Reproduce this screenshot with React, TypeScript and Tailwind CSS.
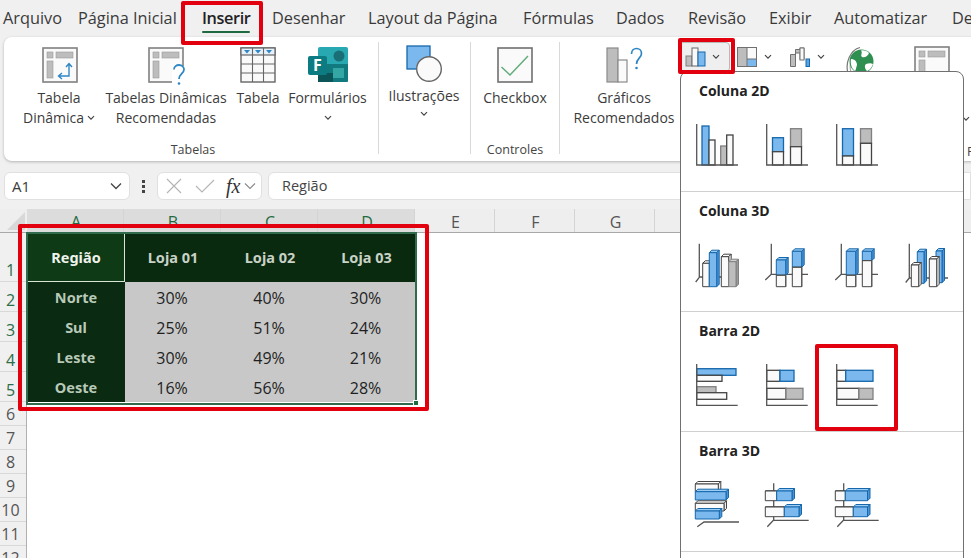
import React from "react";

type T = "b" | "g" | "w";
const fills: Record<T, [string, string, string, string]> = {
  b: ["#7ab8ee", "#1668ac", "#9ccbf3", "#4b93d6"],
  g: ["#bdbdbd", "#808080", "#d0d0d0", "#9a9a9a"],
  w: ["#fafafa", "#444444", "#ffffff", "#f0f0f0"],
};

function R({ x, y, x2, y2, t }: { x: number; y: number; x2: number; y2: number; t: T }) {
  return <rect x={x} y={y} width={x2 - x} height={y2 - y} fill={fills[t][0]} stroke={fills[t][1]} strokeWidth={1.3} />;
}

function Box({ x, y, x2, y2, t, d = 2.5 }: { x: number; y: number; x2: number; y2: number; t: T; d?: number }) {
  const [f, s, top, side] = fills[t];
  return (
    <g stroke={s} strokeWidth={1} strokeLinejoin="round">
      <polygon points={`${x},${y} ${x + d},${y - d} ${x2 + d},${y - d} ${x2},${y}`} fill={top} />
      <polygon points={`${x2},${y} ${x2 + d},${y - d} ${x2 + d},${y2 - d} ${x2},${y2}`} fill={side} />
      <rect x={x} y={y} width={x2 - x} height={y2 - y} fill={f} />
    </g>
  );
}

function Ax({ d }: { d: string }) {
  return <path d={d} fill="none" stroke="#555555" strokeWidth={1.3} />;
}

function Ico({ children }: { children: React.ReactNode }) {
  return (
    <svg width={44} height={44} viewBox="0 0 44 44" className="overflow-visible shrink-0">
      {children}
    </svg>
  );
}

const col2d = (
  <>
    <Ico>
      <R x={6} y={3} x2={13} y2={42} t="b" />
      <R x={13} y={17} x2={19} y2={42} t="w" />
      <R x={24.7} y={23} x2={30.7} y2={42} t="g" />
      <R x={30.7} y={12} x2={37} y2={42} t="w" />
      <Ax d="M0.7 1V42H42" />
    </Ico>
    <Ico>
      <R x={6.5} y={14.7} x2={17.5} y2={28.7} t="b" />
      <R x={6.5} y={28.7} x2={17.5} y2={42} t="w" />
      <R x={24.5} y={5.7} x2={35.5} y2={23.7} t="g" />
      <R x={24.5} y={23.7} x2={35.5} y2={42} t="w" />
      <Ax d="M0.7 1V42H42" />
    </Ico>
    <Ico>
      <R x={6.5} y={5.7} x2={17.5} y2={33} t="b" />
      <R x={6.5} y={33} x2={17.5} y2={42} t="w" />
      <R x={24.5} y={5.7} x2={35.5} y2={20.3} t="g" />
      <R x={24.5} y={20.3} x2={35.5} y2={42} t="w" />
      <Ax d="M0.7 1V42H42" />
    </Ico>
  </>
);

const col3d = (
  <>
    <Ico>
      <Ax d="M3.3 0.7V34.3L-0.3 39M3.3 34H42" />
      <Box x={6.7} y={20.3} x2={13.3} y2={43.7} t="w" />
      <Box x={13.3} y={9.7} x2={20.7} y2={43.7} t="b" />
      <Box x={25.3} y={13.7} x2={32.7} y2={43.7} t="w" />
      <Box x={32.7} y={18.7} x2={40} y2={43.7} t="g" />
    </Ico>
    <Ico>
      <Ax d="M5.3 0.7V31.3L-0.7 37M5.3 31.3H42" />
      <Box x={10.3} y={17} x2={19.7} y2={32.3} t="b" />
      <Box x={10.3} y={32.3} x2={19.7} y2={43.7} t="w" d={0} />
      <Box x={26.3} y={8.3} x2={35.7} y2={24.3} t="b" />
      <Box x={26.3} y={24.3} x2={35.7} y2={43.7} t="w" d={0} />
    </Ico>
    <Ico>
      <Ax d="M5.3 0.7V31.3L-0.7 37M5.3 31.3H42" />
      <Box x={10.3} y={8.3} x2={19.7} y2={32.3} t="b" />
      <Box x={10.3} y={32.3} x2={19.7} y2={43.7} t="w" d={0} />
      <Box x={26.3} y={8.3} x2={35.7} y2={17.7} t="b" />
      <Box x={26.3} y={17.7} x2={35.7} y2={43.7} t="w" d={0} />
    </Ico>
    <Ico>
      <Ax d="M3.3 0.7V35L-0.3 39.5M3.3 35H42" />
      <Box x={11.3} y={8.7} x2={18} y2={40.3} t="b" />
      <Box x={5.3} y={22} x2={12.7} y2={43.7} t="w" />
      <Box x={30} y={8} x2={36} y2={39.7} t="b" />
      <Box x={23.3} y={16} x2={30.7} y2={43.7} t="w" />
    </Ico>
  </>
);

const bar2d = (
  <>
    <Ico>
      <R x={0.7} y={5.7} x2={40} y2={12.3} t="b" />
      <R x={0.7} y={12.3} x2={26} y2={18.3} t="w" />
      <R x={0.7} y={23.7} x2={20} y2={29.7} t="g" />
      <R x={0.7} y={29.7} x2={30.7} y2={36.3} t="w" />
      <Ax d="M0.7 1V42.3H41.7" />
    </Ico>
    <Ico>
      <R x={0.7} y={7.3} x2={14} y2={18.3} t="w" />
      <R x={14} y={7.3} x2={28} y2={18.3} t="b" />
      <R x={0.7} y={25.3} x2={20} y2={36.3} t="w" />
      <R x={20} y={25.3} x2={37} y2={36.3} t="g" />
      <Ax d="M0.7 1V42.3H41.7" />
    </Ico>
    <Ico>
      <R x={0.7} y={7.3} x2={9.7} y2={18.3} t="w" />
      <R x={9.7} y={7.3} x2={37} y2={18.3} t="b" />
      <R x={0.7} y={25.3} x2={23} y2={36.3} t="w" />
      <R x={23} y={25.3} x2={37} y2={36.3} t="g" />
      <Ax d="M0.7 1V42.3H41.7" />
    </Ico>
  </>
);

const bar3d = (
  <>
    <Ico>
      <Ax d="M1.3 43.7L8 39H43" />
      <Box x={-0.7} y={1} x2={22.3} y2={8.7} t="w" />
      <Box x={-0.7} y={8.7} x2={30} y2={17} t="b" />
      <Box x={-0.7} y={20.3} x2={28} y2={28} t="w" />
      <Box x={-0.7} y={28} x2={23.3} y2={36} t="b" />
    </Ico>
    <Ico>
      <Ax d="M7.7 0.3V37L1.3 43.7M7.7 37.3H42.7" />
      <Box x={-0.7} y={8} x2={10.7} y2={17.7} t="w" d={0} />
      <Box x={10.7} y={8} x2={26} y2={17.7} t="b" />
      <Box x={-0.7} y={24} x2={18.3} y2={33.7} t="w" d={0} />
      <Box x={18.3} y={24} x2={33} y2={33.7} t="b" />
    </Ico>
    <Ico>
      <Ax d="M7.7 0.3V37L1.3 43.7M7.7 37.3H42.7" />
      <Box x={-0.7} y={8} x2={9.3} y2={17.7} t="w" d={0} />
      <Box x={9.3} y={8} x2={31.5} y2={17.7} t="b" />
      <Box x={-0.7} y={24} x2={17.3} y2={33.7} t="w" d={0} />
      <Box x={17.3} y={24} x2={31.5} y2={33.7} t="b" />
    </Ico>
  </>
);

function Chev({ className = "" }: { className?: string }) {
  return (
    <svg width={8} height={6} viewBox="0 0 8 6" className={className}>
      <path d="M1 1.2L4 4.2L7 1.2" fill="none" stroke="#444444" strokeWidth={1.2} />
    </svg>
  );
}

function PivotBase() {
  return (
    <>
      <rect x={1} y={1} width={34} height={34} fill="#fafafa" stroke="#808080" strokeWidth={1.6} />
      <rect x={5} y={5} width={6} height={6} fill="#bdbdbd" stroke="#9a9a9a" strokeWidth={0.6} />
      <rect x={14} y={5} width={17} height={6} fill="#bdbdbd" stroke="#9a9a9a" strokeWidth={0.6} />
      <rect x={5} y={14} width={6} height={17} fill="#bdbdbd" stroke="#9a9a9a" strokeWidth={0.6} />
    </>
  );
}

function IcoPivot() {
  return (
    <svg width={36} height={36} viewBox="0 0 36 36">
      <PivotBase />
      <path d="M27 17V29H17M24 20L27 16.5L30 20M20 26L16.5 29L20 32" fill="none" stroke="#2f86c5" strokeWidth={1.4} />
    </svg>
  );
}

function IcoPivotRec() {
  return (
    <svg width={40} height={40} viewBox="0 0 40 40" className="overflow-visible">
      <PivotBase />
      <rect x={24} y={19} width={14} height={20} fill="#ffffff" />
      <path d="M26 22.5C26 19.5 28.5 18 31 18C34 18 36 20 36 22.5C36 26.5 31 27 31 32" fill="none" stroke="#2f86c5" strokeWidth={1.8} />
      <circle cx={31} cy={36.5} r={1.3} fill="#2f86c5" />
    </svg>
  );
}

function IcoTable() {
  return (
    <svg width={36} height={36} viewBox="0 0 36 36">
      <rect x={1} y={1} width={34} height={34} fill="#fafafa" stroke="#666666" strokeWidth={1.4} />
      <rect x={1} y={1} width={34} height={7} fill="#e6f0f8" stroke="#666666" strokeWidth={1.2} />
      <path d="M12.5 1V35M23.5 1V35M1 17H35M1 26H35" stroke="#666666" strokeWidth={1.1} />
      <path d="M4 3H10L7 6.5ZM15 3H21L18 6.5ZM26 3H32L29 6.5Z" fill="#2f86c5" />
    </svg>
  );
}

function IcoForms() {
  return (
    <svg width={40} height={36} viewBox="0 0 40 36">
      <rect x={10} y={0} width={30} height={35} rx={2} fill="#28a8b0" />
      <circle cx={31} cy={9} r={5.5} fill="#1a6f76" />
      <rect x={10} y={17} width={30} height={18} rx={1} fill="#117a7e" />
      <rect x={25} y={21} width={11} height={10} fill="#34a6a4" />
      <rect x={10} y={26} width={15} height={9} fill="#0b5457" />
      <rect x={0} y={9} width={19} height={19} rx={2} fill="#0c7c82" />
      <text x={9.5} y={24} textAnchor="middle" fontSize={16} fontWeight={700} fill="#ffffff" fontFamily="'Open Sans', sans-serif">F</text>
    </svg>
  );
}

function IcoShapes() {
  return (
    <svg width={38} height={38} viewBox="0 0 38 38" className="overflow-visible">
      <rect x={1} y={1} width={23} height={23} fill="#7ab8ee" stroke="#1668ac" strokeWidth={1.3} />
      <circle cx={23} cy={24} r={12.3} fill="#fafafa" stroke="#666666" strokeWidth={1.4} />
    </svg>
  );
}

function IcoCheck() {
  return (
    <svg width={36} height={36} viewBox="0 0 36 36">
      <rect x={1} y={1} width={34} height={34} fill="#fafafa" stroke="#707070" strokeWidth={1.6} />
      <path d="M4.5 20L13 28L31 9" fill="none" stroke="#62ad7c" strokeWidth={1.5} />
    </svg>
  );
}

function IcoRecChart() {
  return (
    <svg width={36} height={36} viewBox="0 0 36 36" className="overflow-visible">
      <rect x={1} y={1} width={11} height={34} fill="#bdbdbd" stroke="#8a8a8a" strokeWidth={1.2} />
      <rect x={12} y={13} width={9} height={22} fill="#fafafa" stroke="#8a8a8a" strokeWidth={1.2} />
      <path d="M25.5 7C25.5 3.5 28 1.5 30.5 1.5C33.3 1.5 35.5 3.5 35.5 6.5C35.5 11 30.5 11.5 30.5 17" fill="none" stroke="#2f86c5" strokeWidth={1.7} />
      <circle cx={30.5} cy={21} r={1.3} fill="#2f86c5" />
    </svg>
  );
}

function IcoColumns() {
  return (
    <svg width={21} height={20} viewBox="0 0 21 20">
      <rect x={1} y={9} width={6} height={10} fill="#bdbdbd" stroke="#808080" />
      <rect x={7} y={1} width={6} height={18} fill="#fafafa" stroke="#666666" />
      <rect x={13} y={5} width={7} height={14} fill="#7ab8ee" stroke="#1668ac" />
    </svg>
  );
}

function IcoTree() {
  return (
    <svg width={20} height={20} viewBox="0 0 20 20">
      <rect x={0.5} y={0.5} width={19} height={19} fill="#fafafa" stroke="#707070" />
      <rect x={1} y={1} width={9} height={18} fill="#bdbdbd" />
      <rect x={10} y={12} width={9} height={7} fill="#7ab8ee" />
      <path d="M10 0.5V19.5M10 12H19.5" stroke="#707070" />
    </svg>
  );
}

function IcoWater() {
  return (
    <svg width={20} height={20} viewBox="0 0 20 20">
      <path d="M0.5 19.5V7.5H5.5V2.5H10V1H14V12.5H10V6H5.5V19.5Z" fill="#bdbdbd" stroke="#707070" strokeWidth={1} />
      <rect x={10} y={1} width={4} height={12} fill="#fafafa" stroke="#707070" />
      <rect x={16} y={12} width={3.5} height={7.5} fill="#5aa3e3" stroke="#1668ac" />
    </svg>
  );
}

function IcoGlobe() {
  return (
    <svg width={30} height={30} viewBox="0 0 30 30">
      <path d="M2 27C-1 17 4 4 14 1.5" fill="none" stroke="#777777" strokeWidth={1.2} />
      <path d="M5 26C2 18 7 8 13 5" fill="none" stroke="#999999" strokeWidth={1} />
      <circle cx={15.5} cy={15.5} r={12} fill="#2f8f50" />
      <path d="M15 4.5C17 7 14 9 16 11C19 12 22 10 23 7C21 5 18 4 15 4.5ZM5 13C8 13 11 15 11 19C10 22 10 24 9 25C6 23 4 18 5 13ZM20 18C23 17 25 17 27 18C26 21 24 24 21 25C19 23 18 20 20 18Z" fill="#ffffff" />
    </svg>
  );
}

const sans = "[font-family:'Open_Sans','Noto_Sans',sans-serif]";

const tabs: { t: string; w: string }[] = [
  { t: "Arquivo", w: "w-[75px]" },
  { t: "Página Inicial", w: "w-[124px]" },
  { t: "Inserir", w: "w-[70px]" },
  { t: "Desenhar", w: "w-[96px]" },
  { t: "Layout da Página", w: "w-[155px]" },
  { t: "Fórmulas", w: "w-[93px]" },
  { t: "Dados", w: "w-[72px]" },
  { t: "Revisão", w: "w-[81px]" },
  { t: "Exibir", w: "w-[65px]" },
  { t: "Automatizar", w: "w-[118px]" },
  { t: "Desenvolvedor", w: "w-[120px]" },
];

function Item({
  icon,
  lines,
  chev,
  w,
  className = "",
}: {
  icon: React.ReactNode;
  lines: React.ReactNode[];
  chev?: boolean;
  w: string;
  className?: string;
}) {
  return (
    <div className={`flex flex-col items-center shrink-0 ${w} ${className}`}>
      <div className="h-[36px] flex items-start justify-center">{icon}</div>
      <div className="mt-[5px] text-center leading-[20px] text-[14px] text-[#3c3c3c] whitespace-nowrap">
        {lines.map((l, i) => (
          <div key={i}>{l}</div>
        ))}
        {chev && (
          <div className="flex justify-center h-[20px] items-center">
            <Chev />
          </div>
        )}
      </div>
    </div>
  );
}

function Group({ w, label, children, lp = "" }: { w: string; label: string; children: React.ReactNode; lp?: string }) {
  return (
    <div className={`shrink-0 h-full flex flex-col justify-between pt-[10px] pb-[1px] ${w}`}>
      <div className="flex">{children}</div>
      <div className={`h-[20px] leading-[20px] text-center text-[12.5px] text-[#444444] ${lp}`}>{label}</div>
    </div>
  );
}

const Sep = () => <div className="w-px h-[112px] mt-[5px] bg-[#d9d9d9] shrink-0" />;

const letters: { l: string; w: string; sel: boolean }[] = [
  { l: "A", w: "w-[97px]", sel: true },
  { l: "B", w: "w-[97px]", sel: true },
  { l: "C", w: "w-[97px]", sel: true },
  { l: "D", w: "w-[97px]", sel: true },
  { l: "E", w: "w-[80px]", sel: false },
  { l: "F", w: "w-[80px]", sel: false },
  { l: "G", w: "w-[80px]", sel: false },
  { l: "H", w: "w-[80px]", sel: false },
  { l: "I", w: "w-[80px]", sel: false },
  { l: "J", w: "w-[80px]", sel: false },
];

const rowsH: { n: number; h: string; sel: boolean }[] = [
  { n: 1, h: "h-[49px]", sel: true },
  { n: 2, h: "h-[30px]", sel: true },
  { n: 3, h: "h-[30px]", sel: true },
  { n: 4, h: "h-[30px]", sel: true },
  { n: 5, h: "h-[30px]", sel: true },
  { n: 6, h: "h-[24px]", sel: false },
  { n: 7, h: "h-[24px]", sel: false },
  { n: 8, h: "h-[24px]", sel: false },
  { n: 9, h: "h-[24px]", sel: false },
  { n: 10, h: "h-[24px]", sel: false },
  { n: 11, h: "h-[24px]", sel: false },
  { n: 12, h: "h-[24px]", sel: false },
];

const data: string[][] = [
  ["Norte", "30%", "40%", "30%"],
  ["Sul", "25%", "51%", "24%"],
  ["Leste", "30%", "49%", "21%"],
  ["Oeste", "16%", "56%", "28%"],
];

function Section({ title, children }: { title: string; children: React.ReactNode }) {
  return (
    <div className="h-[120px] border-b border-[#d0d0d0] shrink-0">
      <div className={`pt-[9px] h-[51px] pl-[18px] text-[14px] leading-[20px] font-bold text-[#222222] ${sans}`}>{title}</div>
      <div className="flex gap-[26px] pl-[15px]">{children}</div>
    </div>
  );
}

export default function App() {
  return (
    <div className={`relative w-[971px] h-[558px] overflow-hidden bg-[#f0f0f0] ${sans}`}>
      {/* tabs */}
      <div className="flex h-[37px] pl-[3px] text-[16.3px] text-[#3a3a3a] whitespace-nowrap">
        {tabs.map((t) =>
          t.t === "Inserir" ? (
            <div key={t.t} className={`relative shrink-0 h-[37px] leading-[36px] font-semibold text-[#222222] tracking-[-0.4px] ${t.w}`}>
              {t.t}
              <div className="absolute left-0 top-[31px] w-[48px] h-[2px] rounded bg-[#1f6b3f]" />
            </div>
          ) : (
            <div key={t.t} className={`shrink-0 leading-[36px] ${t.w}`}>{t.t}</div>
          )
        )}
      </div>

      {/* ribbon */}
      <div className="ml-[4px] w-[980px] h-[124px] bg-white rounded-lg shadow-[0_1px_3px_rgba(0,0,0,0.25)] flex overflow-hidden">
        <Group w="w-[374px]" label="Tabelas" lp="pl-[4px]">
          <Item
            w="w-[92px] ml-[9px]"
            icon={<div className="pl-[2px]"><IcoPivot /></div>}
            lines={[
              "Tabela",
              <span className="inline-flex items-center gap-[3px]" key="d">Dinâmica<Chev /></span>,
            ]}
          />
          <Item w="w-[122px]" icon={<div className="pl-[4px]"><IcoPivotRec /></div>} lines={["Tabelas Dinâmicas", "Recomendadas"]} />
          <Item w="w-[54px]" className="ml-[4px]" icon={<IcoTable />} lines={["Tabela"]} />
          <Item w="w-[79px]" className="ml-[3px]" icon={<IcoForms />} chev lines={["Formulários"]} />
        </Group>
        <Sep />
        <Group w="w-[91px]" label="">
          <div className="flex flex-col items-center w-[90px] -mt-[2px]">
            <div className="h-[36px] pl-[2px]"><IcoShapes /></div>
            <div className="mt-[5px] leading-[20px] text-[14px] text-[#3c3c3c]">Ilustrações</div>
            <div className="h-[16px] flex items-center"><Chev /></div>
          </div>
        </Group>
        <Sep />
        <Group w="w-[88px]" label="Controles">
          <Item w="w-[88px]" icon={<IcoCheck />} lines={["Checkbox"]} />
        </Group>
        <Sep />
        <Group w="w-[120px]" label="">
          <Item w="w-[110px]" className="ml-[9px]" icon={<div className="pr-[1px]"><IcoRecChart /></div>} lines={["Gráficos", "Recomendados"]} />
        </Group>
        <div className="shrink-0 w-[290px] h-full flex flex-col">
          <div className="flex items-center h-[32px] mt-[4px] -ml-[1px]">
            <div className="flex items-center gap-[6px] w-[51px] h-[30px] pl-[5px] rounded border border-[#b8b8b8] bg-[#efefef]">
              <IcoColumns />
              <Chev />
            </div>
            <div className="flex items-center gap-[7px] ml-[7px]">
              <IcoTree />
              <Chev />
            </div>
            <div className="flex items-center gap-[7px] ml-[18px]">
              <IcoWater />
              <Chev />
            </div>
            <div className="ml-[21px] mt-[8px]"><IcoGlobe /></div>
            <div className="ml-[38px] mt-[14px]">
              <svg width={36} height={36} viewBox="0 0 36 36"><PivotBase /></svg>
            </div>
          </div>
          <div className="flex justify-start pl-[282px] mt-[43px]"><Chev /></div>
          <div className="pl-[287px] mt-[20px] text-[12.5px] leading-[20px] text-[#444444]">Fi</div>
        </div>
      </div>

      {/* formula bar */}
      <div className="flex items-center h-[28px] mt-[11px] pl-[4px] gap-0">
        <div className="w-[126px] h-[28px] shrink-0 bg-white border border-[#e0e0e0] rounded-md flex items-center justify-between pl-[7px] pr-[7px] text-[15px] text-[#3a3a3a]">
          A1
          <svg width={12} height={8} viewBox="0 0 12 8"><path d="M1 1.5L6 6.5L11 1.5" fill="none" stroke="#444444" strokeWidth={1.3} /></svg>
        </div>
        <div className="w-[27px] shrink-0 flex flex-col items-center gap-[2px]">
          <div className="w-[3px] h-[3px] bg-[#444444]" />
          <div className="w-[3px] h-[3px] bg-[#444444]" />
          <div className="w-[3px] h-[3px] bg-[#444444]" />
        </div>
        <div className="w-[105px] h-[28px] shrink-0 bg-white border border-[#e0e0e0] rounded-md flex items-center pl-[8px]">
          <svg width={16} height={16} viewBox="0 0 16 16"><path d="M1 1L15 15M15 1L1 15" stroke="#b5b5b5" strokeWidth={1.2} /></svg>
          <svg width={20} height={16} viewBox="0 0 20 16" className="ml-[13px]"><path d="M1 8L7 14L19 2" fill="none" stroke="#b5b5b5" strokeWidth={1.2} /></svg>
          <span className="ml-[11px] text-[20px] leading-[20px] italic text-[#333333] [font-family:'Liberation_Serif',serif]">fx</span>
          <svg width={12} height={8} viewBox="0 0 12 8" className="ml-[4px]"><path d="M1 1.5L6 6.5L11 1.5" fill="none" stroke="#8a8a8a" strokeWidth={1.1} /></svg>
        </div>
        <div className="ml-[6px] flex-1 h-[28px] bg-white border border-[#e0e0e0] rounded-l-md flex items-center pl-[13px] text-[14.5px] text-[#444444]">Região</div>
      </div>

      {/* sheet */}
      <div className="mt-[9px]">
        <div className="flex h-[24px] border-b border-[#a8a8a8] bg-[#eeeeee]">
          <div className="w-[27px] shrink-0 relative">
            <div className="absolute right-[2px] bottom-[2px] w-0 h-0 border-l-[18px] border-l-transparent border-b-[18px] border-b-[#d8d8d8]" />
          </div>
          {letters.map((c) => (
            <div
              key={c.l}
              className={`${c.w} shrink-0 text-center pl-[2px] text-[16px] leading-[26px] border-r border-[#d4d4d4] ${c.sel ? "bg-[#dcdcdc] text-[#1f6b3f]" : "text-[#555555]"}`}
            >
              {c.l}
            </div>
          ))}
        </div>
        <div className="flex bg-white h-[330px]">
          <div className="w-[27px] shrink-0 bg-[#f0f0f0] border-r border-[#b0b0b0]">
            {rowsH.map((r) => (
              <div
                key={r.n}
                className={`${r.h} flex items-end justify-center pr-[5px] pb-[1px] border-b border-[#d8d8d8] text-[16px] leading-[20px] ${r.sel ? "text-[#2c6e49]" : "text-[#555555]"}`}
              >
                {r.n}
              </div>
            ))}
          </div>
          <div className="pt-[1px] pl-[1px]">
            <div className="grid grid-cols-[97px_97px_97px_96px] grid-rows-[48px_30px_30px_30px_30px] w-[387px] bg-[#c8c8c8] text-[16px] text-[#1f1f1f]">
              <div className="flex items-center justify-center bg-[#0f3a16] border-r border-b border-[#d8e4d8] text-[14.5px] text-[#eef3ec] font-bold [font-family:'Noto_Sans',sans-serif]">Região</div>
              {["Loja 01", "Loja 02", "Loja 03"].map((h) => (
                <div key={h} className="flex items-center justify-center pr-[1px] bg-[#0a2a0f] text-[14.5px] text-[#c8d2c6] font-bold [font-family:'Noto_Sans',sans-serif]">{h}</div>
              ))}
              {data.map((row) =>
                row.map((c, i) =>
                  i === 0 ? (
                    <div key={row[0]} className="flex items-center justify-center bg-[#0a2a12] pr-[1px] pt-[2px] text-[14.5px] text-[#b9c9b8] font-bold [font-family:'Noto_Sans',sans-serif]">{c}</div>
                  ) : (
                    <div key={row[0] + i} className="flex items-center justify-center pr-[3px] pt-[2px]">{c}</div>
                  )
                )
              )}
            </div>
          </div>
        </div>
      </div>

      {/* selection */}
      <div className="absolute left-[26px] top-[232px] w-[391px] h-[173px] border-2 border-[#2f6b4c]" />
      <div className="absolute left-[413px] top-[400px] w-[6px] h-[6px] bg-[#1f6b3f] border border-white" />

      {/* dropdown menu */}
      <div className="absolute left-[680px] top-[71px] w-[284px] h-[520px] bg-white border border-[#707070] rounded-lg flex flex-col">
        <Section title="Coluna 2D">{col2d}</Section>
        <Section title="Coluna 3D">{col3d}</Section>
        <Section title="Barra 2D">{bar2d}</Section>
        <Section title="Barra 3D">{bar3d}</Section>
      </div>

      {/* red annotations */}
      <div className="absolute left-[181px] top-[1px] w-[82px] h-[44px] border-[4px] border-[#e2000f] rounded-[2px]" />
      <div className="absolute left-[678px] top-[38px] w-[57px] h-[36px] border-[4px] border-[#e2000f] rounded-[2px]" />
      <div className="absolute left-[18px] top-[224px] w-[411px] h-[187px] border-[4px] border-[#e2000f] rounded-[2px]" />
      <div className="absolute left-[815px] top-[344px] w-[83px] h-[87px] border-[4px] border-[#e2000f] rounded-[2px]" />
    </div>
  );
}
